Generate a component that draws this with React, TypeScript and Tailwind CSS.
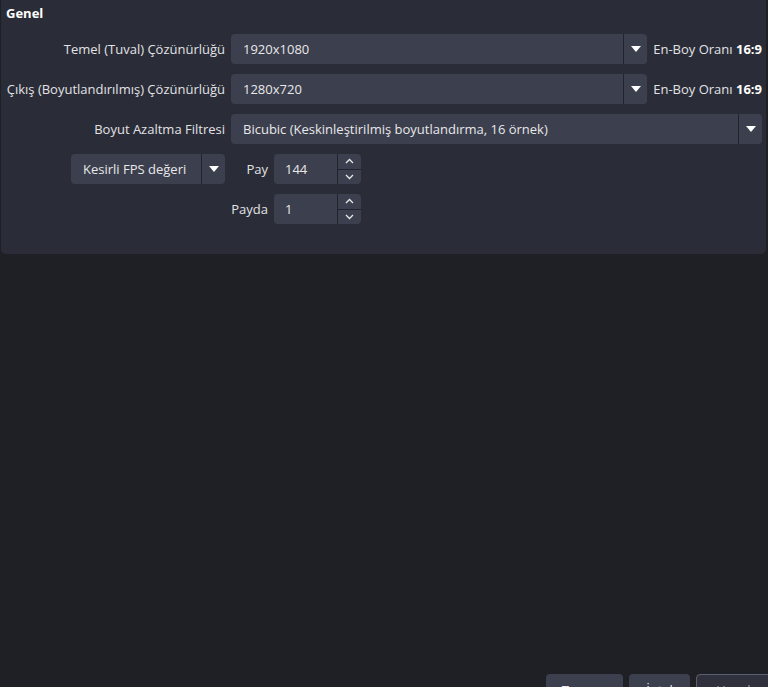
const font = { fontFamily: '"Open Sans", "Noto Sans", sans-serif' };

function Caret() {
  return (
    <svg width="10" height="6" viewBox="0 0 10 6" className="text-white">
      <path d="M0 0 L10 0 L5 6 Z" fill="currentColor" />
    </svg>
  );
}

function Combo({ value, className = "" }: { value: string; className?: string }) {
  return (
    <div className={`h-[30px] flex items-stretch rounded-[4px] bg-[#3c3f4d] ${className}`}>
      <div className="flex-1 flex items-center pl-[12px] pt-[2px] text-[13px] text-[#e8e8ea] whitespace-nowrap overflow-hidden">
        {value}
      </div>
      <div className="w-[1px] bg-[#22242b]" />
      <div className="w-[23px] flex items-center justify-center">
        <Caret />
      </div>
    </div>
  );
}

function Spin({ value }: { value: string }) {
  return (
    <div className="h-[30px] w-[87px] flex items-stretch rounded-[4px] bg-[#3c3f4d]">
      <div className="flex-1 flex items-center pl-[11px] pt-[2px] text-[13px] text-[#e8e8ea]">{value}</div>
      <div className="w-[1px] bg-[#22242b]" />
      <div className="w-[23px] flex flex-col">
        <div className="flex-1 flex items-center justify-center border-b border-[#22242b]">
          <svg width="9" height="6" viewBox="0 0 9 6">
            <path d="M1 5 L4.5 1.5 L8 5" fill="none" stroke="#e8e8ea" strokeWidth="1.3" />
          </svg>
        </div>
        <div className="flex-1 flex items-center justify-center">
          <svg width="9" height="6" viewBox="0 0 9 6">
            <path d="M1 1 L4.5 4.5 L8 1" fill="none" stroke="#e8e8ea" strokeWidth="1.3" />
          </svg>
        </div>
      </div>
    </div>
  );
}

function Label({ text, w = "w-[224px]" }: { text: string; w?: string }) {
  return (
    <div className={`${w} shrink-0 pt-[2px] text-right text-[13px] text-[#e2e2e6] whitespace-nowrap`}>{text}</div>
  );
}

function Aspect() {
  return (
    <div className="shrink-0 pt-[2px] text-[13px] text-[#e2e2e6] whitespace-nowrap">
      En-Boy Oranı <span className="font-bold text-white">16:9</span>
    </div>
  );
}

export default function App() {
  return (
    <div className="h-[687px] w-[768px] overflow-hidden bg-[#1f2026] flex flex-col" style={font}>
      {/* Genel group */}
      <section className="ml-[1px] mr-[2px] h-[254px] bg-[#2a2d37] rounded-b-[5px] pr-[4px]">
        <h2 className="pl-[5px] pt-[3px] h-[34px] text-[13px] font-bold text-white leading-[20px]">Genel</h2>
        <div className="flex flex-col gap-[10px]">
          <div className="flex items-center gap-[6px]">
            <Label text="Temel (Tuval) Çözünürlüğü" />
            <Combo value="1920x1080" className="flex-1" />
            <Aspect />
          </div>
          <div className="flex items-center gap-[6px]">
            <Label text="Çıkış (Boyutlandırılmış) Çözünürlüğü" />
            <Combo value="1280x720" className="flex-1" />
            <Aspect />
          </div>
          <div className="flex items-center gap-[6px]">
            <Label text="Boyut Azaltma Filtresi" />
            <Combo value="Bicubic (Keskinleştirilmiş boyutlandırma, 16 örnek)" className="flex-1" />
          </div>
          <div className="flex items-center gap-[6px]">
            <div className="w-[224px] shrink-0 flex justify-end">
              <Combo value="Kesirli FPS değeri" className="w-[154px]" />
            </div>
            <Label text="Pay" w="w-[37px]" />
            <Spin value="144" />
          </div>
          <div className="flex items-center gap-[6px]">
            <div className="w-[224px] shrink-0" />
            <Label text="Payda" w="w-[37px]" />
            <Spin value="1" />
          </div>
        </div>
      </section>

      <div className="flex-1" />

      {/* dialog buttons, cut off by the window's bottom edge */}
      <div className="h-[33px] mb-[-20px] flex justify-end gap-[6px] -mr-[10px]">
        <button className="w-[77px] rounded-[4px] bg-[#3c3f4d] text-[13px] text-[#e8e8ea]">Tamam</button>
        <button className="w-[61px] rounded-[4px] bg-[#3c3f4d] text-[13px] text-[#e8e8ea]">İptal</button>
        <button className="w-[82px] rounded-[4px] bg-[#2f323d] border border-[#5a5e6e] text-[13px] text-[#9a9ca6]">Uygula</button>
      </div>
    </div>
  );
}
